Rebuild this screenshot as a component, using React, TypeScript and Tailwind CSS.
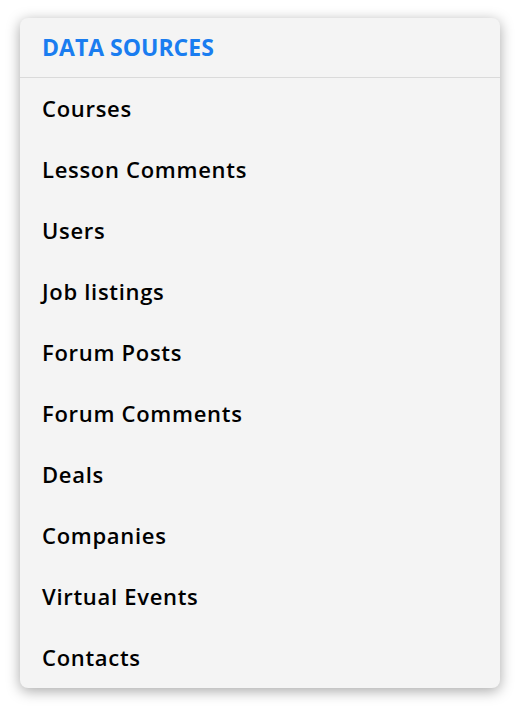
const sources = [
  'Courses',
  'Lesson Comments',
  'Users',
  'Job listings',
  'Forum Posts',
  'Forum Comments',
  'Deals',
  'Companies',
  'Virtual Events',
  'Contacts',
];

export default function App() {
  return (
    <div
      className="min-h-screen bg-white px-5 pt-[18px]"
      style={{ fontFamily: '"Open Sans", "Noto Sans", sans-serif' }}
    >
      <div className="w-[480px] rounded-lg bg-[#f4f4f4] shadow-[0_3px_14px_rgba(0,0,0,0.35)]">
        <div className="flex h-[60px] items-center border-b border-[#dadada] px-[22px]">
          <h2 className="text-[23px] font-bold text-[#1a7df0]">DATA SOURCES</h2>
        </div>
        <ul>
          {sources.map((name) => (
            <li
              key={name}
              className="flex h-[61px] items-center px-[22px] text-[22px] font-semibold tracking-[0.7px] text-black"
            >
              {name}
            </li>
          ))}
        </ul>
      </div>
    </div>
  );
}
